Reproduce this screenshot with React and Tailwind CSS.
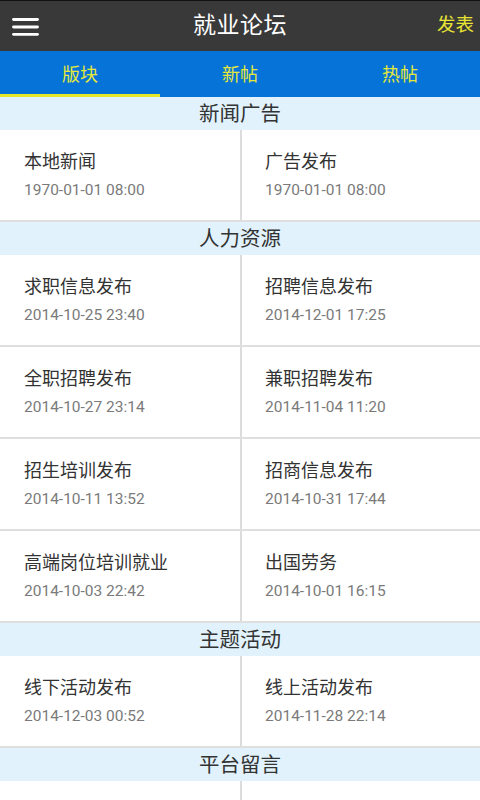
const SECTIONS = [
  {
    title: '新闻广告',
    rows: [[['本地新闻', '1970-01-01 08:00'], ['广告发布', '1970-01-01 08:00']]],
  },
  {
    title: '人力资源',
    rows: [
      [['求职信息发布', '2014-10-25 23:40'], ['招聘信息发布', '2014-12-01 17:25']],
      [['全职招聘发布', '2014-10-27 23:14'], ['兼职招聘发布', '2014-11-04 11:20']],
      [['招生培训发布', '2014-10-11 13:52'], ['招商信息发布', '2014-10-31 17:44']],
      [['高端岗位培训就业', '2014-10-03 22:42'], ['出国劳务', '2014-10-01 16:15']],
    ],
  },
  {
    title: '主题活动',
    rows: [[['线下活动发布', '2014-12-03 00:52'], ['线上活动发布', '2014-11-28 22:14']]],
  },
  {
    title: '平台留言',
    rows: [[['', ''], ['', '']]],
  },
];

const TABS = ['版块', '新帖', '热帖'];

function Cell({ name, date, className }) {
  return (
    <div className={`flex flex-col justify-center gap-[6px] ${className}`}>
      <p className="text-[18px] leading-[24px] text-[#333333]">{name}</p>
      <p className="text-[15.5px] leading-[20px] text-[#7a7a7a]">{date}</p>
    </div>
  );
}

export default function App() {
  return (
    <div
      className="w-[480px] h-[800px] overflow-hidden bg-white flex flex-col"
      style={{ fontFamily: 'Roboto, "Noto Sans CJK SC", sans-serif' }}
    >
      {/* Title bar */}
      <header className="h-[51px] shrink-0 bg-[#393939] border-t border-[#111111] flex items-center justify-between">
        <svg width="50" height="50" viewBox="0 0 50 50" className="shrink-0">
          <g stroke="#ffffff" strokeWidth="2.8" strokeLinecap="round">
            <line x1="13.5" y1="18.5" x2="37.5" y2="18.5" />
            <line x1="13.5" y1="26" x2="37.5" y2="26" />
            <line x1="13.5" y1="33.3" x2="37.5" y2="33.3" />
          </g>
        </svg>
        <h1 className="text-[23px] text-white tracking-[0.5px]">就业论坛</h1>
        <span className="w-[50px] text-right pr-[6px] text-[18.5px] text-[#e9e633]">发表</span>
      </header>

      {/* Tabs */}
      <nav className="h-[46px] shrink-0 bg-[#0673d8] flex">
        {TABS.map((t, i) => (
          <div
            key={t}
            className={`flex-1 flex items-center justify-center pt-[3px] border-b-[3px] text-[18px] text-[#e5e83a] ${
              i === 0 ? 'border-[#e8e72c]' : 'border-transparent'
            }`}
          >
            {t}
          </div>
        ))}
      </nav>

      {/* Board list */}
      <div className="flex-1 min-h-0">
        {SECTIONS.map((s) => (
          <section key={s.title}>
            <div className="h-[33px] pt-[2px] bg-[#e1f2fc] flex items-center justify-center text-[20.5px] text-[#333333]">
              {s.title}
            </div>
            {s.rows.map((row, ri) => (
              <div key={ri} className="h-[92px] flex border-b-2 border-[#dfdfdf]">
                <Cell name={row[0][0]} date={row[0][1]} className="w-[240px] pl-6" />
                <div className="w-[2px] bg-[#dcdcdc]" />
                <Cell name={row[1][0]} date={row[1][1]} className="flex-1 pl-[23px]" />
              </div>
            ))}
          </section>
        ))}
      </div>
    </div>
  );
}
